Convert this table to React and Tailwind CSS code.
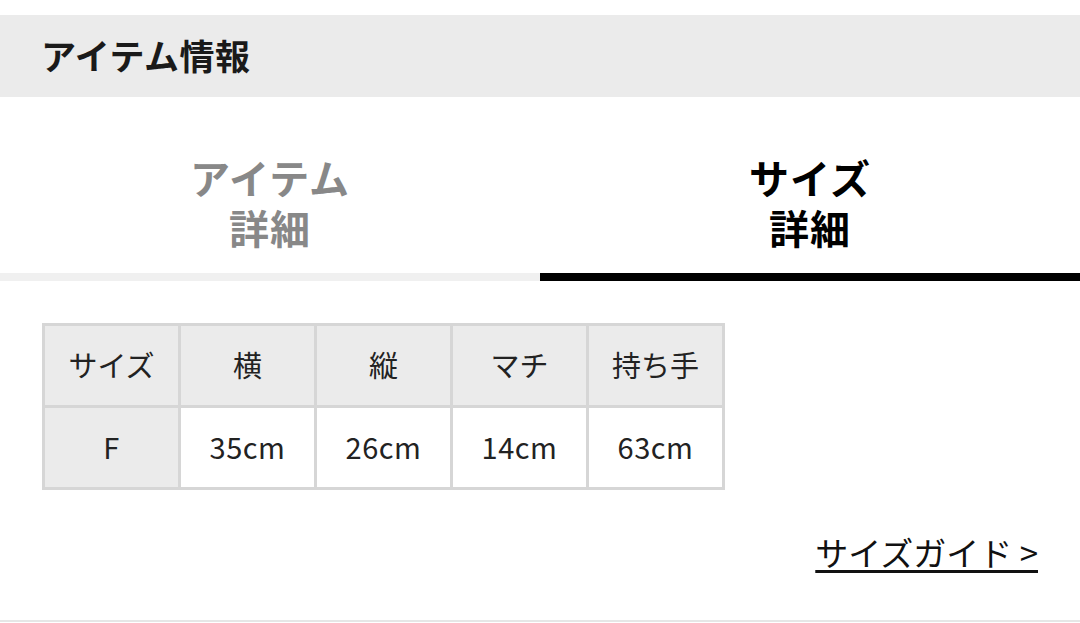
const headers = ["サイズ", "横", "縦", "マチ", "持ち手"];
const row = ["F", "35cm", "26cm", "14cm", "63cm"];

export default function App() {
  return (
    <div
      className="w-[1080px] h-[623px] bg-white overflow-hidden text-[#1a1a1a]"
      style={{ fontFamily: '"Noto Sans CJK JP", "Noto Sans", sans-serif' }}
    >
      <div className="h-[15px]" />
      <div className="h-[82px] bg-[#ebebeb] flex items-center pl-[41px] pb-[3px]">
        <h2 className="text-[35px] font-bold leading-none tracking-[0.5px]">アイテム情報</h2>
      </div>

      <div className="flex">
        <button className="flex-1 flex flex-col">
          <div className="pt-[55px] pb-[21px] text-[40px] font-bold leading-[50px] text-[#888888] tracking-[1px]">
            <div>アイテム</div>
            <div>詳細</div>
          </div>
          <div className="h-[8px] bg-[#f0f0f0]" />
        </button>
        <button className="flex-1 flex flex-col">
          <div className="pt-[55px] pb-[21px] text-[40px] font-bold leading-[50px] text-black tracking-[1px]">
            <div>サイズ</div>
            <div>詳細</div>
          </div>
          <div className="h-[8px] bg-black" />
        </button>
      </div>

      <div className="pl-[42px] pt-[42px]">
        <table className="border-collapse text-[29px] text-[#222]">
          <tbody>
            <tr>
              {headers.map((h) => (
                <td
                  key={h}
                  className="w-[136px] h-[82px] pb-[2px] border-[3px] border-[#d6d6d6] bg-[#ebebeb] text-center align-middle"
                >
                  {h}
                </td>
              ))}
            </tr>
            <tr>
              {row.map((v, i) => (
                <td
                  key={i}
                  className={`w-[136px] h-[82px] pb-[2px] border-[3px] border-[#d6d6d6] text-center align-middle tracking-[0.5px] ${
                    i === 0 ? "bg-[#ebebeb]" : "bg-white"
                  }`}
                >
                  {v}
                </td>
              ))}
            </tr>
          </tbody>
        </table>
      </div>

      <div className="flex justify-end pr-[42px] pt-[46px]">
        <a className="text-[33px] leading-none underline decoration-[3px] underline-offset-[4px] text-[#111]">
          サイズガイド &gt;
        </a>
      </div>
      <div className="mt-[51px] h-[2px] bg-[#e6e6e6]" />
    </div>
  );
}
